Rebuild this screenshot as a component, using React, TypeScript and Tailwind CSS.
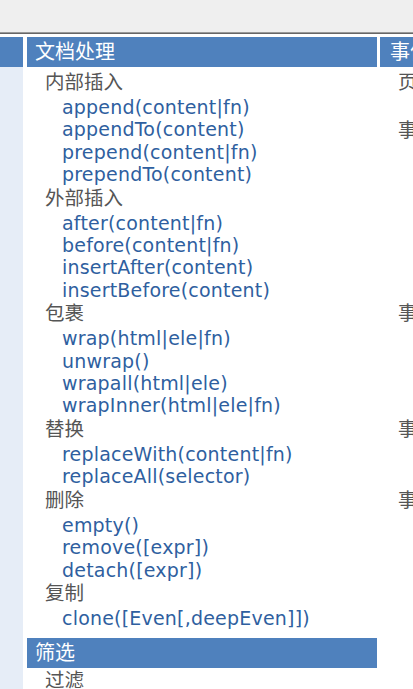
const groups: { title: string; items: string[] }[] = [
  { title: "内部插入", items: ["append(content|fn)", "appendTo(content)", "prepend(content|fn)", "prependTo(content)"] },
  { title: "外部插入", items: ["after(content|fn)", "before(content|fn)", "insertAfter(content)", "insertBefore(content)"] },
  { title: "包裹", items: ["wrap(html|ele|fn)", "unwrap()", "wrapall(html|ele)", "wrapInner(html|ele|fn)"] },
  { title: "替换", items: ["replaceWith(content|fn)", "replaceAll(selector)"] },
  { title: "删除", items: ["empty()", "remove([expr])", "detach([expr])"] },
  { title: "复制", items: ["clone([Even[,deepEven]])"] },
];

const eventGroups: { title: string; items: string[] }[] = [
  { title: "页面载入", items: ["ready(fn)"] },
  { title: "事件处理", items: ["on(eve,[sel],[data],fn)", "off(eve,[sel],[fn])", "bind(type,[data],fn)", "one(type,[data],fn)", "trigger(type,[data])", "triggerHandler(type, [data])", "unbind(t,[d|f])"] },
  { title: "事件委派", items: ["live(type,[data],fn)", "die(type,[fn])", "delegate(s,[t],[d],fn)", "undelegate([s,[t],fn])"] },
  { title: "事件切换", items: ["hover([over,]out)", "toggle([spd],[eas],[fn])"] },
  { title: "事件", items: ["blur([[data],fn])", "change([[data],fn])"] },
];

function Header({ title, pad = "pl-[8px]" }: { title: string; pad?: string }) {
  return (
    <div className={`h-[30px] bg-[#4f81bd] ${pad} text-[20px] leading-[30px] text-white whitespace-nowrap`}>
      {title}
    </div>
  );
}

function Group({ title, items }: { title: string; items: string[] }) {
  return (
    <div>
      <div className="pl-[18px] text-[19.5px] leading-[24px] text-[#555] whitespace-nowrap">{title}</div>
      <ul className="pt-[2px] pl-[35px]">
        {items.map((it) => (
          <li
            key={it}
            className="text-[19px] leading-[22.4px] tracking-[0.2px] text-[#2f5f9f] whitespace-nowrap"
            style={{ fontFamily: '"DejaVu Sans", "Noto Sans CJK SC", sans-serif' }}
          >
            {it}
          </li>
        ))}
      </ul>
    </div>
  );
}

export default function App() {
  return (
    <div
      className="w-[413px] h-[689px] overflow-hidden bg-white"
      style={{ fontFamily: '"Open Sans", "Noto Sans CJK SC", sans-serif' }}
    >
      <div className="h-[32px] bg-[#efefef]" />
      <div className="h-[1px] bg-[#999]" />
      <div className="h-[1px] bg-[#666]" />
      <div className="flex pt-[3px] h-[655px]">
        {/* left column, mostly scrolled out */}
        <div className="w-[23px] shrink-0 flex flex-col">
          <div className="h-[30px] bg-[#4f81bd]" />
          <div className="flex-1 bg-[#e6edf7]" />
        </div>

        <div className="w-[350px] shrink-0 ml-[4px]">
          <Header title="文档处理" />
          <div className="pt-[3px]">
            {groups.map((g) => (
              <Group key={g.title} title={g.title} items={g.items} />
            ))}
          </div>
          <div className="mt-[9px]">
            <Header title="筛选" />
            <div className="pl-[18px] text-[19.5px] leading-[24px] text-[#555]">过滤</div>
          </div>
        </div>

        <div className="w-[350px] shrink-0 ml-[3px] overflow-hidden">
          <Header title="事件" pad="pl-[10px]" />
          <div className="pt-[3px]">
            {eventGroups.map((g) => (
              <Group key={g.title} title={g.title} items={g.items} />
            ))}
          </div>
        </div>
      </div>
    </div>
  );
}
